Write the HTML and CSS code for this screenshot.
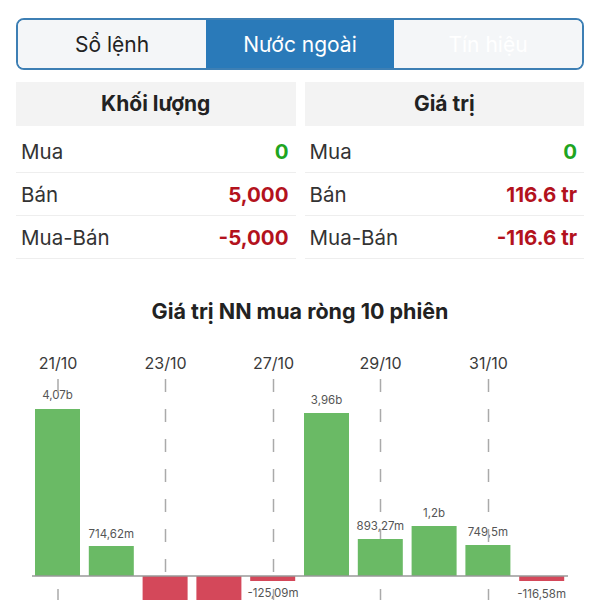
FILE: index.html
```html
<!DOCTYPE html>
<html lang="vi">
<head>
<meta charset="UTF-8" />
<meta name="viewport" content="width=device-width, initial-scale=1" />
<title>Nước ngoài</title>
<link rel="stylesheet" href="styles.css">
</head>
<body>

<nav class="tabs">
  <button class="tab">Sổ lệnh</button>
  <button class="tab active">Nước ngoài</button>
  <button class="tab faded">Tín hiệu</button>
</nav>

<div class="stats">
  <div class="stat-col">
    <div class="stat-head">Khối lượng</div>
    <div class="stat-row"><span>Mua</span><b class="up">0</b></div>
    <div class="stat-row"><span>Bán</span><b class="down">5,000</b></div>
    <div class="stat-row"><span>Mua-Bán</span><b class="down">-5,000</b></div>
  </div>
  <div class="stat-col">
    <div class="stat-head">Giá trị</div>
    <div class="stat-row"><span>Mua</span><b class="up">0</b></div>
    <div class="stat-row"><span>Bán</span><b class="down">116.6 tr</b></div>
    <div class="stat-row"><span>Mua-Bán</span><b class="down">-116.6 tr</b></div>
  </div>
</div>

<section class="chart">
  <h2>Giá trị NN mua ròng 10 phiên</h2>
  <svg class="chart-svg" viewBox="0 340 600 260" width="600" height="260">
    <!-- ngày -->
    <text class="date" x="58" y="368">21/10</text>
    <text class="date" x="165.5" y="368">23/10</text>
    <text class="date" x="273.5" y="368">27/10</text>
    <text class="date" x="380.5" y="368">29/10</text>
    <text class="date" x="488.5" y="368">31/10</text>

    <!-- giá trị -->
    <text class="val" x="57.5" y="398">4,07b</text>
    <text class="val" x="111.3" y="537">714,62m</text>
    <text class="val" x="273" y="596">-125,09m</text>
    <text class="val" x="326.5" y="403">3,96b</text>
    <text class="val" x="380.3" y="529">893,27m</text>
    <text class="val" x="434.1" y="516">1,2b</text>
    <text class="val" x="487.9" y="535">749,5m</text>
    <text class="val" x="541.7" y="597">-116,58m</text>

    <!-- lưới -->
    <line class="grid" x1="58" y1="378" x2="58" y2="600" />
    <line class="grid" x1="165.5" y1="378" x2="165.5" y2="600" />
    <line class="grid" x1="273.5" y1="378" x2="273.5" y2="600" />
    <line class="grid" x1="380.5" y1="378" x2="380.5" y2="600" />
    <line class="grid" x1="488.5" y1="378" x2="488.5" y2="600" />

    <!-- cột -->
    <rect class="bar-up" x="35" y="408" width="45" height="167" />
    <rect class="bar-up" x="88.8" y="545" width="45" height="30" />
    <rect class="bar-down" x="142.6" y="575" width="45" height="40" />
    <rect class="bar-down" x="196.4" y="575" width="45" height="40" />
    <rect class="bar-down" x="250.2" y="575" width="45" height="5" />
    <rect class="bar-up" x="304" y="412" width="45" height="163" />
    <rect class="bar-up" x="357.8" y="538" width="45" height="37" />
    <rect class="bar-up" x="411.6" y="525" width="45" height="50" />
    <rect class="bar-up" x="465.4" y="544" width="45" height="31" />
    <rect class="bar-down" x="519.2" y="575" width="45" height="5" />

    <line class="axis" x1="32" y1="575" x2="568" y2="575" />
  </svg>
</section>

</body>
</html>
```

FILE: styles.css
```css
body { margin: 0; background: #fff; font-family: "Inter", "Roboto", "Noto Sans", sans-serif; color: #222; }

.tabs {
  display: grid; grid-template-columns: 1fr 1fr 1fr;
  margin: 18px 16px 0; height: 52px; box-sizing: border-box;
  border: 2px solid #3d7fb4; border-radius: 8px; overflow: hidden;
}
.tab {
  border: none; background: #f4f6f8; color: #222; font-family: inherit;
  font-size: 21px; padding: 0; cursor: pointer;
}
.tab.active { background: #2a7ab9; color: #fff; }
.tab.faded { color: #fff; }

.stats { display: grid; grid-template-columns: 1fr 1fr; gap: 9px; margin: 12px 16px 0; }
.stat-head {
  background: #f3f3f3; height: 44px; line-height: 44px; text-align: center;
  font-size: 21px; font-weight: 700; margin-bottom: 4px;
}
.stat-row {
  display: flex; justify-content: space-between; align-items: center;
  height: 42px; padding: 0 7px 0 5px; border-bottom: 1px solid #eee;
  font-size: 20.5px; color: #333;
}
.stat-row b { font-weight: 700; }
.up { color: #1fa51f; }
.down { color: #b3121d; }

.chart h2 { margin: 40px 0 0; text-align: center; font-size: 21.5px; line-height: 24px; font-weight: 700; color: #222; }
.chart-svg { display: block; margin-top: 18px; }
.date { font-size: 16px; fill: #3a3a3a; text-anchor: middle; }
.val { font-size: 11.5px; fill: #555; text-anchor: middle; }
.grid { stroke: #aaa; stroke-width: 1.5; stroke-dasharray: 13 17; }
.bar-up { fill: #6aba65; }
.bar-down { fill: #d4485a; }
.axis { stroke: #999; stroke-width: 1.5; }
```
